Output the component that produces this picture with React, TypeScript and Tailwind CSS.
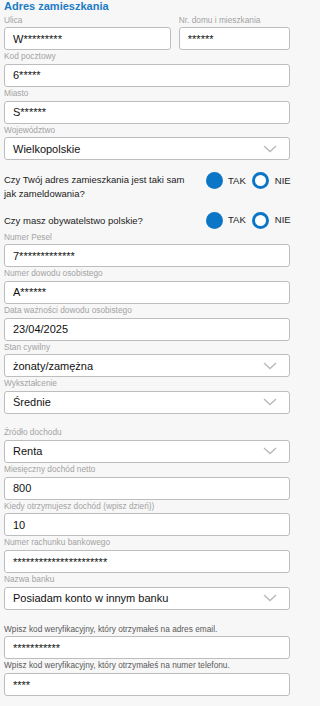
import React from "react";

const font = { fontFamily: '"Liberation Sans", Arial, sans-serif' };

function Label({ children, dark }: { children: React.ReactNode; dark?: boolean }) {
  return (
    <div
      className={`h-[13.7px] text-[8.3px] leading-[13.7px] whitespace-nowrap ${
        dark ? "text-[#5a5a5a]" : "text-[#a3a3a3]"
      }`}
    >
      {children}
    </div>
  );
}

function TextInput({ value }: { value: string }) {
  return (
    <input
      readOnly
      size={1}
      value={value}
      className="block w-full min-w-0 h-[23px] rounded-[3px] border border-[#bdbdbd] bg-white px-[8px] text-[11px] text-[#111] outline-none"
    />
  );
}

function Field({ label, value, dark }: { label: string; value: string; dark?: boolean }) {
  return (
    <div className="min-w-0">
      <Label dark={dark}>{label}</Label>
      <TextInput value={value} />
    </div>
  );
}

function SelectField({ label, value }: { label: string; value: string }) {
  return (
    <div>
      <Label>{label}</Label>
      <div className="flex h-[23px] items-center justify-between rounded-[3px] border border-[#bdbdbd] bg-white pl-[8px] pr-[12px] text-[11px] text-[#111]">
        <span>{value}</span>
        <svg width="14" height="8" viewBox="0 0 14 8" fill="none">
          <path d="M1 1l6 5.5L13 1" stroke="#b8b8b8" strokeWidth="1.3" />
        </svg>
      </div>
    </div>
  );
}

function YesNo({ offset }: { offset: string }) {
  return (
    <div className={`flex shrink-0 items-center text-[9.5px] text-[#222] ${offset}`}>
      <span className="h-[17px] w-[17px] rounded-full bg-[#0b76c5]" />
      <span className="ml-[5px]">TAK</span>
      <span className="ml-[6px] h-[17px] w-[17px] rounded-full border-[3px] border-[#0b76c5] bg-white" />
      <span className="ml-[6px]">NIE</span>
    </div>
  );
}

export default function App() {
  return (
    <div className="min-h-screen bg-[#f7f7f7]" style={font}>
      <div className="w-[299px] overflow-hidden pl-[4px] pr-[9px]">
        <h2 className="h-[13.6px] text-[11px] font-bold leading-[13.6px] text-[#1c7bc5]">
          Adres zamieszkania
        </h2>

        <div className="grid grid-cols-[minmax(0,3fr)_minmax(0,2fr)] gap-x-[8px]">
          <Field label="Ulica" value="W*********" />
          <Field label="Nr. domu i mieszkania" value="******" />
        </div>
        <Field label="Kod pocztowy" value="6*****" />
        <Field label="Miasto" value="S******" />
        <SelectField label="Województwo" value="Wielkopolskie" />

        {/* Questions */}
        <div className="mt-[12.7px] flex items-start text-[9.5px] leading-[14px] text-[#222]">
          <p className="w-[194px] shrink-0">Czy Twój adres zamieszkania jest taki sam jak zameldowania?</p>
          <div className="ml-[8px]">
            <YesNo offset="-mt-[1px]" />
          </div>
        </div>
        <div className="mt-[13px] flex items-start text-[9.5px] leading-[14px] text-[#222]">
          <p className="w-[194px] shrink-0">Czy masz obywatelstwo polskie?</p>
          <div className="ml-[8px]">
            <YesNo offset="-mt-[2.5px]" />
          </div>
        </div>

        <div className="mt-[2px]">
          <Field label="Numer Pesel" value="7*************" />
        </div>
        <Field label="Numer dowodu osobistego" value="A******" />
        <Field label="Data ważności dowodu osobistego" value="23/04/2025" />
        <SelectField label="Stan cywilny" value="żonaty/zamężna" />
        <SelectField label="Wykształcenie" value="Średnie" />

        <div className="mt-[12.3px]">
          <SelectField label="Źródło dochodu" value="Renta" />
        </div>
        <Field label="Miesięczny dochód netto" value="800" />
        <Field label="Kiedy otrzymujesz dochód (wpisz dzień))" value="10" />
        <Field label="Numer rachunku bankowego" value="**********************" />
        <SelectField label="Nazwa banku" value="Posiadam konto w innym banku" />

        <div className="mt-[13px]">
          <Field
            dark
            label="Wpisz kod weryfikacyjny, który otrzymałeś na adres email."
            value="***********"
          />
        </div>
        <Field
          dark
          label="Wpisz kod weryfikacyjny, który otrzymałeś na numer telefonu."
          value="****"
        />
      </div>
    </div>
  );
}
